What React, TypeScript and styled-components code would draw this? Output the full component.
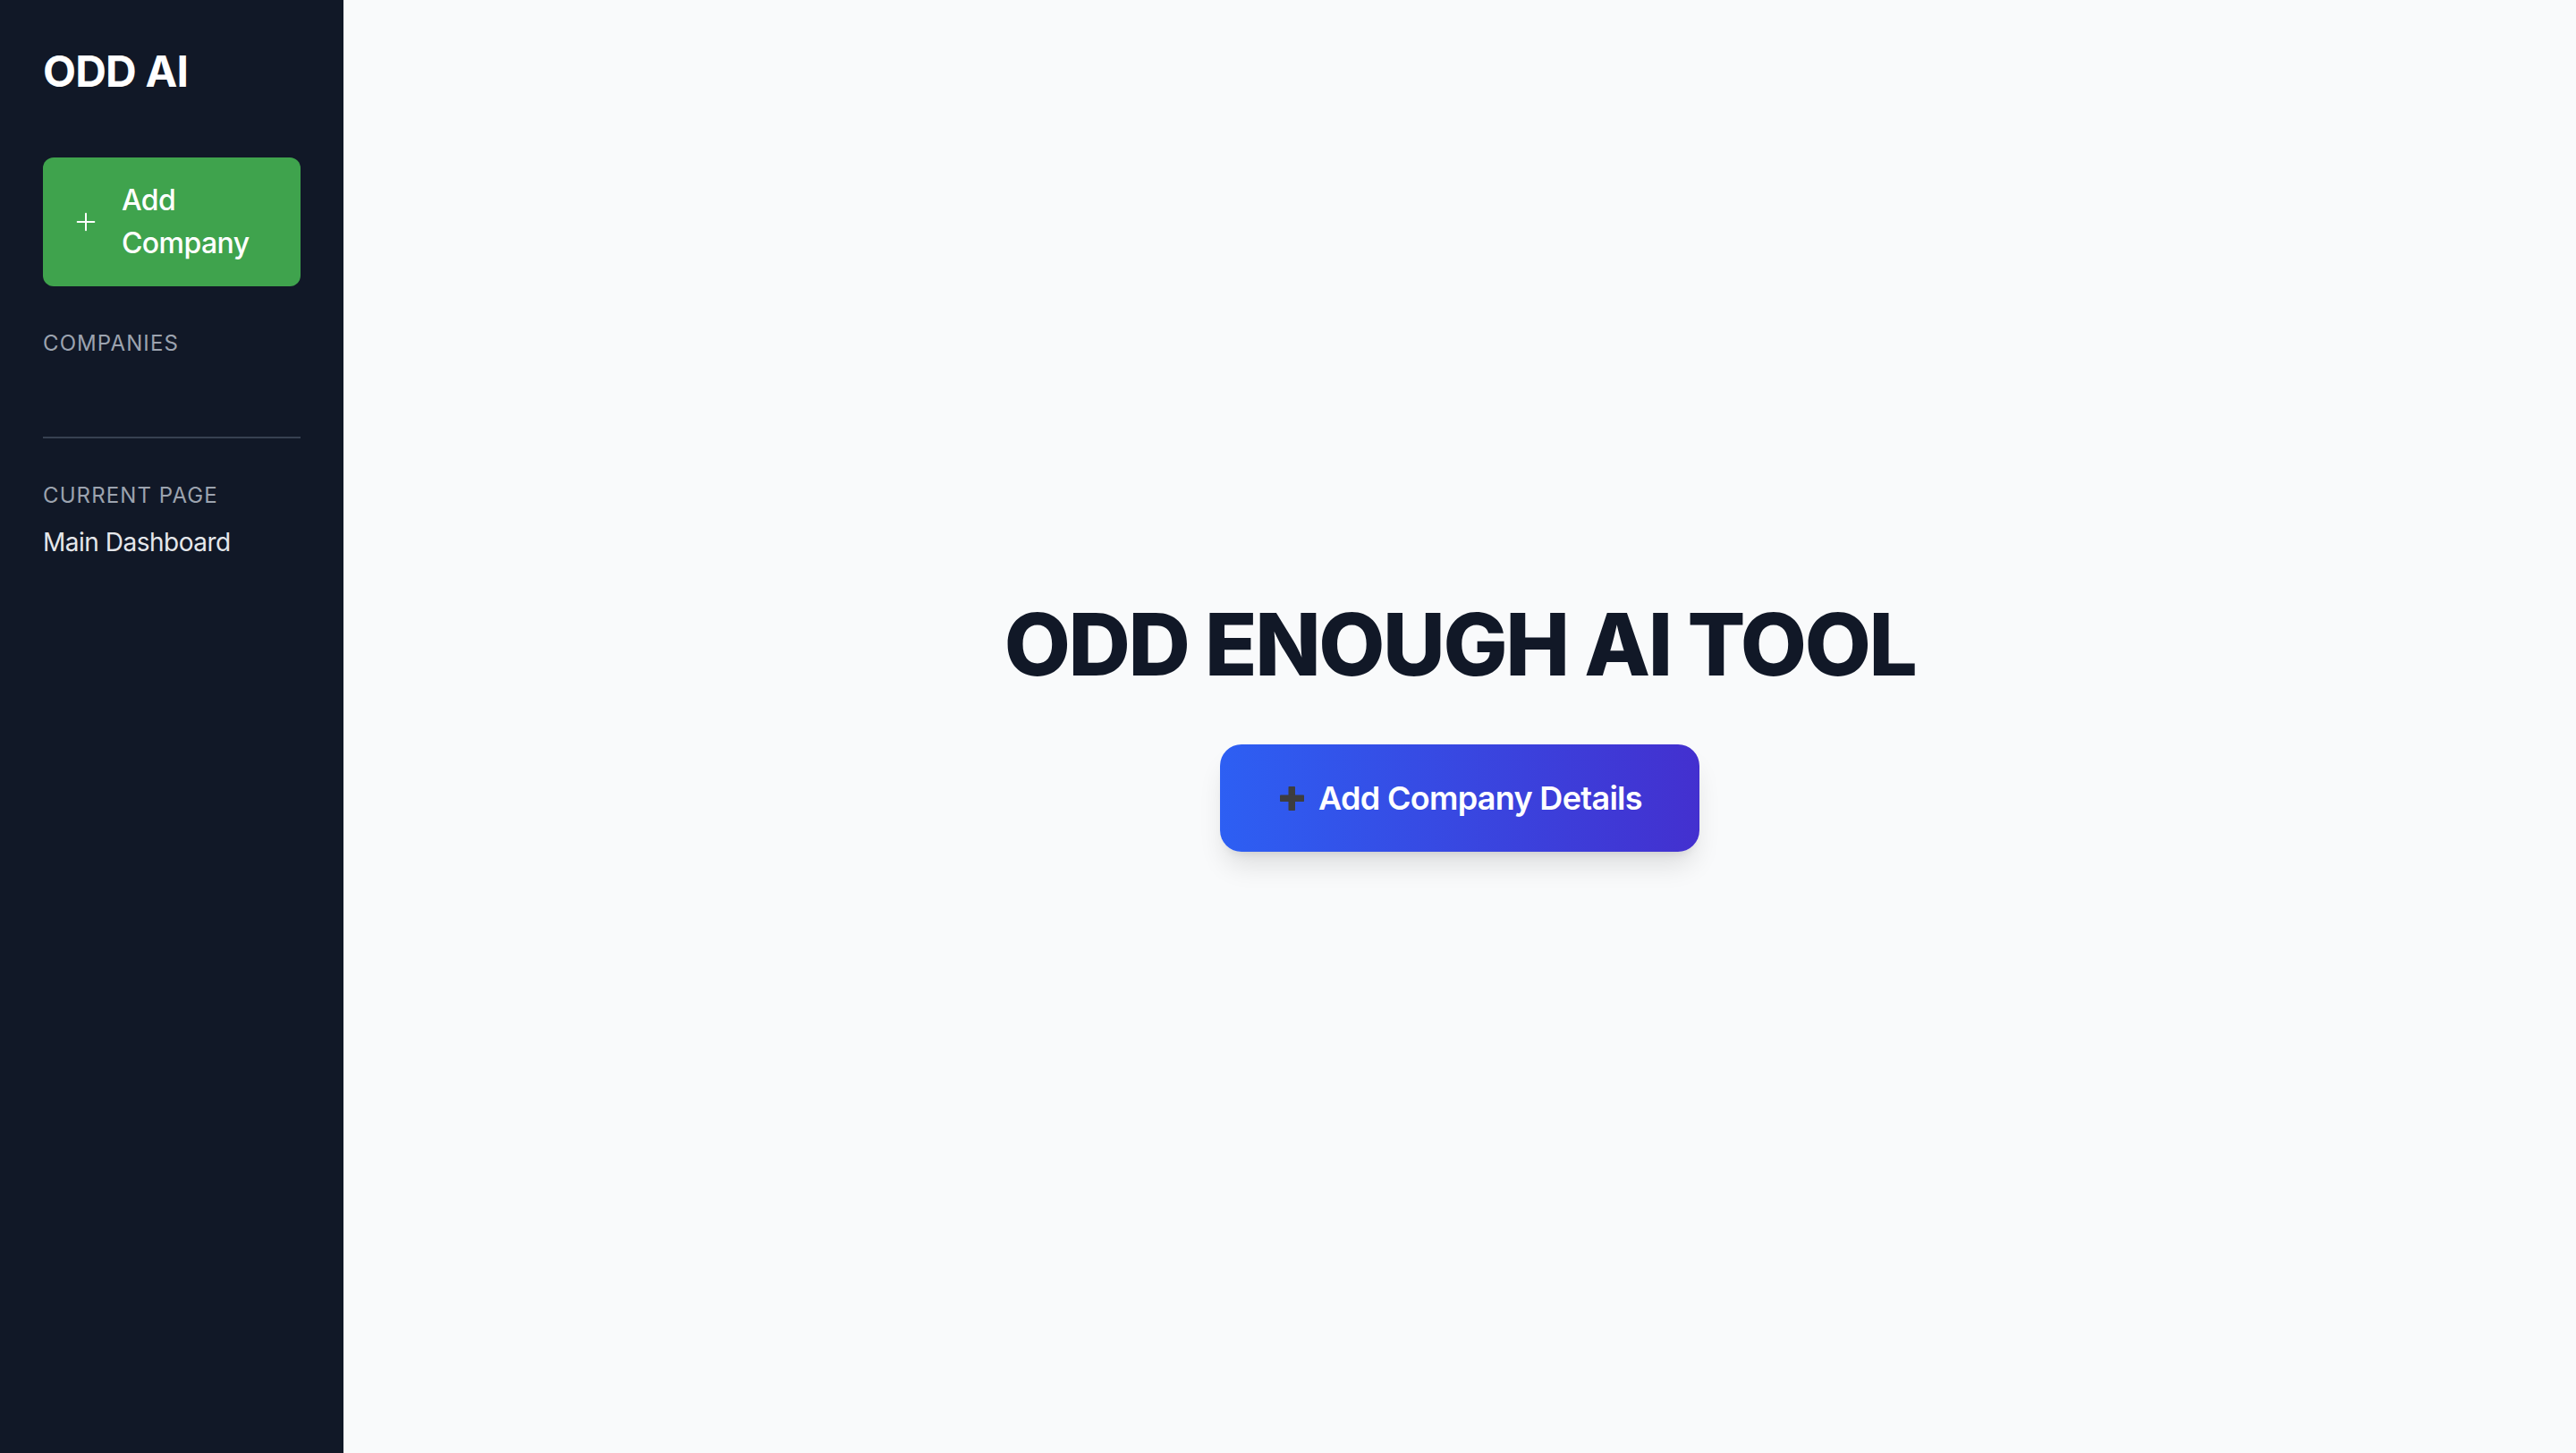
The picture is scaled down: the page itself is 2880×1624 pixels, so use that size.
import React from "react";
import styled, { createGlobalStyle } from "styled-components";
import { Plus } from "lucide-react";

const GlobalStyle = createGlobalStyle`
  * { box-sizing: border-box; }
  html, body { margin: 0; padding: 0; }
  body {
    font-family: Inter, "Noto Sans", "Liberation Sans", sans-serif;
    background: #f9fafb;
  }
`;

const Layout = styled.div`
  display: flex;
  width: 100%;
  min-height: 100vh;
`;

const Sidebar = styled.aside`
  width: 384px;
  flex-shrink: 0;
  background: #111827;
  padding: 48px;
  display: flex;
  flex-direction: column;
`;

const Brand = styled.h1`
  margin: 0;
  font-size: 48px;
  line-height: 64px;
  font-weight: 700;
  color: #ffffff;
  letter-spacing: -0.8px;
`;

const AddButton = styled.button`
  margin-top: 64px;
  width: 100%;
  display: flex;
  align-items: center;
  gap: 24px;
  padding: 24px 32px;
  border: none;
  border-radius: 12px;
  background: #3fa34d;
  color: #ffffff;
  font-family: inherit;
  font-size: 32px;
  line-height: 48px;
  font-weight: 500;
  letter-spacing: -0.6px;
  text-align: left;
  cursor: pointer;
  svg { flex-shrink: 0; }
`;

const SectionLabel = styled.div<{ $top: number }>`
  margin-top: ${(p) => p.$top}px;
  font-size: 24px;
  line-height: 32px;
  font-weight: 400;
  letter-spacing: 1.1px;
  text-transform: uppercase;
  color: #9ca3af;
`;

const CompanyList = styled.ul`
  list-style: none;
  margin: 16px 0 0;
  padding: 0;
  min-height: 72px;
`;

const Divider = styled.hr`
  margin: 0;
  border: none;
  border-top: 2px solid #374151;
`;

const CurrentPage = styled.div`
  margin-top: 16px;
  font-size: 28px;
  line-height: 40px;
  letter-spacing: -0.5px;
  color: #e5e7eb;
`;

const Main = styled.main`
  flex: 1;
  display: flex;
  flex-direction: column;
  align-items: center;
  justify-content: center;
  background: #f9fafb;
`;

const Heading = styled.h2`
  margin: 0 0 64px;
  font-size: 96px;
  line-height: 96px;
  font-weight: 800;
  color: #111827;
  letter-spacing: -2.4px;
`;

const CtaButton = styled.button`
  display: flex;
  align-items: center;
  gap: 14px;
  padding: 32px 64px;
  border: none;
  border-radius: 24px;
  background: linear-gradient(90deg, #2d5ff3 0%, #4330cf 100%);
  color: #ffffff;
  font-family: inherit;
  font-size: 36px;
  line-height: 56px;
  font-weight: 600;
  letter-spacing: -0.7px;
  box-shadow: 0 20px 30px -6px rgba(0, 0, 0, 0.12), 0 8px 12px -8px rgba(0, 0, 0, 0.12);
  cursor: pointer;
`;

const HeavyPlus = () => (
  <svg width="32" height="32" viewBox="0 0 32 32" aria-hidden>
    <rect x="12.5" y="3" width="7.5" height="27" rx="0.8" fill="#3d3d3f" />
    <rect x="3" y="12.6" width="27" height="7.5" rx="0.8" fill="#3d3d3f" />
  </svg>
);

export default function App() {
  return (
    <>
      <GlobalStyle />
      <Layout>
        <Sidebar>
          <Brand>ODD AI</Brand>
          <AddButton>
            <Plus size={32} strokeWidth={1.5} />
            <span>Add Company</span>
          </AddButton>
          <SectionLabel $top={48}>Companies</SectionLabel>
          <CompanyList />
          <Divider />
          <SectionLabel $top={48}>Current Page</SectionLabel>
          <CurrentPage>Main Dashboard</CurrentPage>
        </Sidebar>
        <Main>
          <Heading>ODD ENOUGH AI TOOL</Heading>
          <CtaButton>
            <HeavyPlus />
            <span>Add Company Details</span>
          </CtaButton>
        </Main>
      </Layout>
    </>
  );
}
